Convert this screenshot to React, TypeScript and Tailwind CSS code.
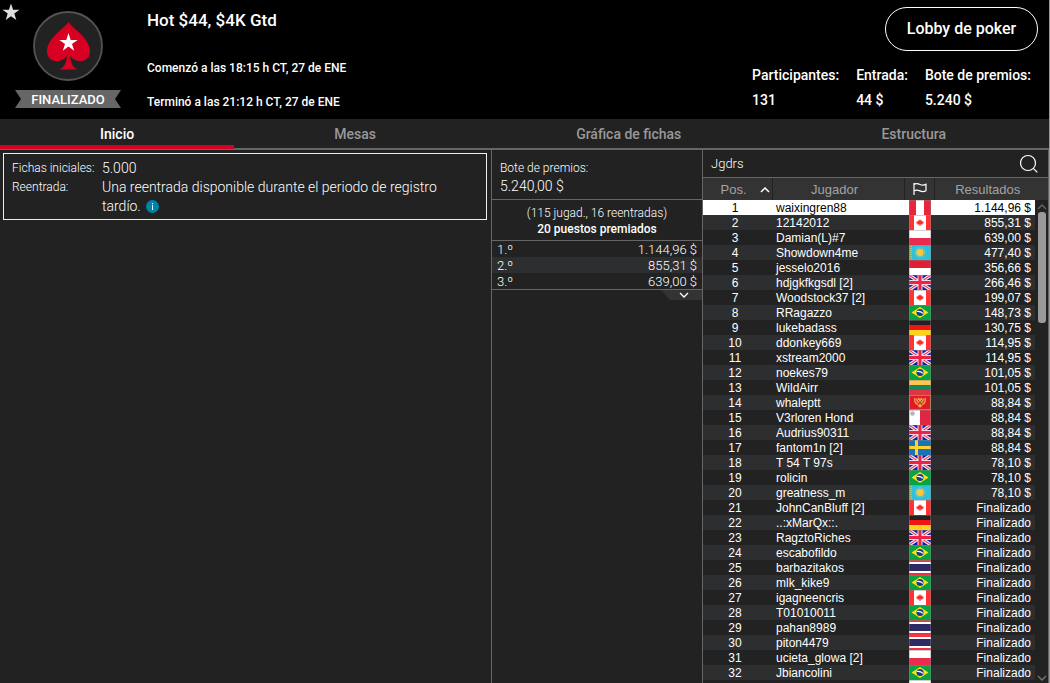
import { useState } from "react";

const flagPole = "#8886";

type FlagCode = "pe" | "ca" | "pl" | "kz" | "id" | "gb" | "br" | "de" | "lt" | "me" | "mt" | "se" | "th";

const flagNames: Record<FlagCode, string> = {
  pe: "Perú", ca: "Canadá", pl: "Polonia", kz: "Kazajistán", id: "Indonesia", gb: "Reino Unido",
  br: "Brasil", de: "Alemania", lt: "Lituania", me: "Montenegro", mt: "Malta", se: "Suecia", th: "Tailandia",
};

function FlagArt({ code }: { code: FlagCode }) {
  switch (code) {
    case "pe":
      return (<><rect width="22" height="15" fill="#fff" /><rect width="7" height="15" fill="#e8253f" /><rect x="15" width="7" height="15" fill="#e8253f" /></>);
    case "ca":
      return (
        <>
          <rect width="22" height="15" fill="#fff" />
          <rect width="5" height="15" fill="#ff3334" />
          <rect x="17" width="5" height="15" fill="#ff3334" />
          <path d="M10.500 4.500h1v1h1.500v1h1.500v2h-1v1h-2v1.500h-1V9.500h-2v-1h-1v-2H9v-1h1.500z" fill="#ff2a2a" />
        </>
      );
    case "pl":
      return (<><rect width="22" height="15" fill="#fff" /><rect y="8" width="22" height="7" fill="#ea2b50" /></>);
    case "id":
      return (<><rect width="22" height="15" fill="#fff" /><rect width="22" height="8" fill="#de1f37" /></>);
    case "kz":
      return (
        <>
          <rect width="22" height="15" fill="#30c0dc" />
          <path d="M2 1v14" stroke="#c9c75a" strokeWidth="1.500" strokeDasharray="1 1" />
          <circle cx="11" cy="7.500" r="4.600" fill="none" stroke="#a8c878" strokeWidth="1.400" strokeDasharray="1 .8" />
          <circle cx="11" cy="7.500" r="3.600" fill="#fcc740" />
        </>
      );
    case "gb":
      return (
        <>
          <rect width="22" height="15" fill="#1420a0" />
          <path d="M0 0l22 15M22 0L0 15" stroke="#f4eef8" strokeWidth="3.400" />
          <path d="M0 0l22 15M22 0L0 15" stroke="#e8405c" strokeWidth="1.100" />
          <path d="M11 0v15M0 7.500h22" stroke="#f8d8e4" strokeWidth="5" />
          <path d="M11 0v15M0 7.500h22" stroke="#ea2445" strokeWidth="3" />
        </>
      );
    case "br":
      return (
        <>
          <rect width="22" height="15" fill="#08a443" />
          <path d="M11 2l8.500 5.500L11 13 2.500 7.500z" fill="#ffdc1c" />
          <circle cx="11" cy="7.500" r="3.500" fill="#12408c" />
          <path d="M8 6.500c2-.4 4.200.2 6 1.900" stroke="#fff" strokeWidth="1.100" fill="none" />
        </>
      );
    case "de":
      return (<><rect width="22" height="15" fill="#222" /><rect y="5" width="22" height="5" fill="#f01414" /><rect y="10" width="22" height="5" fill="#ffd21c" /></>);
    case "lt":
      return (<><rect width="22" height="15" fill="#ffc64c" /><rect y="5" width="22" height="5" fill="#16875a" /><rect y="10" width="22" height="5" fill="#dc3745" /></>);
    case "me":
      return (
        <>
          <rect width="22" height="15" fill="#e11a2a" />
          <rect x=".5" y=".5" width="21" height="14" fill="none" stroke="#b9843c" />
          <path d="M6 3c-.8 3 .2 5.500 3 6.500M16 3c.8 3-.2 5.500-3 6.500M7.800 3.500c0 2 .6 3.500 2 4M14.200 3.500c0 2-.6 3.500-2 4" fill="none" stroke="#eba646" strokeWidth="1.400" />
          <path d="M9 2.500l2 1.200 2-1.200.2 2-1.200 1v4l1.500 1.500-2.500 1.800L8.500 11 10 9.500v-4l-1.200-1z" fill="#eba646" />
          <rect x="10" y="6.500" width="2" height="2.500" fill="#8a5a4a" />
        </>
      );
    case "mt":
      return (<><rect width="22" height="15" fill="#fff" /><rect x="11" width="11" height="15" fill="#de2640" /><circle cx="3.500" cy="3.500" r="2.300" fill="#b4b4b4" /></>);
    case "se":
      return (<><rect width="22" height="15" fill="#1a72b8" /><path d="M7.500 0v15M0 7.500h22" stroke="#ffd22e" strokeWidth="3" /></>);
    case "th":
      return (<><rect width="22" height="15" fill="#f0303f" /><rect y="2" width="22" height="11" fill="#fff" /><rect y="4" width="22" height="7" fill="#2e2a66" /></>);
  }
}

function Flag({ code }: { code: FlagCode }) {
  return (
    <svg viewBox="0 0 22 15" className="mx-auto block h-[15px] w-[22px]" role="img" aria-label={flagNames[code]}>
      <FlagArt code={code} />
      <path d="M0 .5h22M.5 0v15M21.500 0v15" stroke={flagPole} fill="none" />
    </svg>
  );
}

const players: [string, FlagCode, string][] = [
  ["waixingren88", "pe", "1.144,96 $"],
  ["12142012", "ca", "855,31 $"],
  ["Damian(L)#7", "pl", "639,00 $"],
  ["Showdown4me", "kz", "477,40 $"],
  ["jesselo2016", "id", "356,66 $"],
  ["hdjgkfkgsdl [2]", "gb", "266,46 $"],
  ["Woodstock37 [2]", "ca", "199,07 $"],
  ["RRagazzo", "br", "148,73 $"],
  ["lukebadass", "de", "130,75 $"],
  ["ddonkey669", "ca", "114,95 $"],
  ["xstream2000", "gb", "114,95 $"],
  ["noekes79", "br", "101,05 $"],
  ["WildAirr", "lt", "101,05 $"],
  ["whaleptt", "me", "88,84 $"],
  ["V3rloren Hond", "mt", "88,84 $"],
  ["Audrius90311", "gb", "88,84 $"],
  ["fantom1n [2]", "se", "88,84 $"],
  ["T 54 T 97s", "gb", "78,10 $"],
  ["rolicin", "br", "78,10 $"],
  ["greatness_m", "kz", "78,10 $"],
  ["JohnCanBluff [2]", "ca", "Finalizado"],
  ["..:xMarQx::.", "de", "Finalizado"],
  ["RagztoRiches", "gb", "Finalizado"],
  ["escabofildo", "br", "Finalizado"],
  ["barbazitakos", "th", "Finalizado"],
  ["mlk_kike9", "br", "Finalizado"],
  ["igagneencris", "ca", "Finalizado"],
  ["T01010011", "br", "Finalizado"],
  ["pahan8989", "th", "Finalizado"],
  ["piton4479", "th", "Finalizado"],
  ["ucieta_glowa [2]", "pl", "Finalizado"],
  ["Jbiancolini", "br", "Finalizado"],
  ["", "pl", ""],
];

const prizes = [
  ["1.º", "1.144,96 $"],
  ["2.º", "855,31 $"],
  ["3.º", "639,00 $"],
];

const tabs = ["Inicio", "Mesas", "Gráfica de fichas", "Estructura"];

const stats = [
  ["Participantes:", "131"],
  ["Entrada:", "44 $"],
  ["Bote de premios:", "5.240 $"],
];

function Header() {
  return (
    <header className="relative flex h-[119px] shrink-0 bg-black">
      <button type="button" aria-label="Favorito" className="absolute left-[2px] top-[3px]">
        <svg viewBox="0 0 18 18" className="block size-[18px]">
          <path d="M9 .5l2.100 6.200h6.400l-5.200 3.900 2 6.400L9 13.200 3.700 17l2-6.400L.5 6.700h6.400z" fill="#ddd" />
        </svg>
      </button>
      <div className="flex w-[136px] flex-col items-center pt-[11px]">
        <svg viewBox="0 0 70 70" className="size-[70px]" role="img" aria-label="PokerStars">
          <circle cx="35" cy="35" r="34" fill="#222" stroke="#545454" strokeWidth="1.800" />
          <path d="M35.500 11C31 18 14 27 14 40.500 14 46.500 18.500 50.200 24 50.200c4 0 7.500-1.800 9.800-5.200-.2 6-2.200 11.300-7.300 13.400h18c-5.100-2.100-7.100-7.400-7.300-13.400 2.300 3.400 5.800 5.200 9.800 5.200 5.500 0 10-3.700 10-9.700C57 27 40 18 35.500 11z" fill="#d70022" />
          <path d="M35.500 22l2.200 6.900h7l-5.700 4.100 2.200 6.700-5.700-4.200-5.700 4.200L32 33l-5.700-4.100h7z" fill="#fff" />
        </svg>
        <div className="relative mt-[9px] flex h-[18px] w-[106px] items-center justify-center text-[13px] font-medium leading-[18px] text-white">
          <svg viewBox="0 0 106 18" className="absolute inset-0 h-full w-full" aria-hidden="true">
            <path d="M0 0h106l-6 9 6 9H0l6-9z" fill="#666" />
          </svg>
          <span className="relative pt-[2px]">FINALIZADO</span>
        </div>
      </div>
      <div className="flex flex-1 flex-col pl-[11px] pt-[10px]">
        <h1 className="text-[17px] font-medium leading-[20px]">Hot $44, $4K Gtd</h1>
        <p className="mt-[28px] text-[12px] font-medium leading-[20px]">Comenzó a las 18:15 h CT, 27 de ENE</p>
        <p className="mt-[14px] text-[12px] font-medium leading-[20px]">Terminó a las 21:12 h CT, 27 de ENE</p>
      </div>
      <div className="flex flex-col items-end pr-[11px] pt-[7px]">
        <button type="button" className="h-[44px] w-[153px] rounded-full border border-white text-[16px] font-medium">
          Lobby de poker
        </button>
        <dl className="mr-[7px] mt-[14px] flex gap-[17px] text-[14px] font-medium leading-[20px]">
          {stats.map(([label, value]) => (
            <div key={label}>
              <dt>{label}</dt>
              <dd className="mt-[5px]">{value}</dd>
            </div>
          ))}
        </dl>
      </div>
    </header>
  );
}

function PlayersTable() {
  return (
    <div className="relative min-h-0 flex-1 overflow-hidden font-['Liberation_Sans',Arial,sans-serif]">
      <table className="w-full table-fixed border-collapse text-[12px] leading-[13px]">
        <colgroup>
          <col className="w-[69px]" />
          <col />
          <col className="w-[30px]" />
          <col className="w-[100px]" />
          <col className="w-[13px]" />
        </colgroup>
        <thead>
          <tr className="h-[22px] bg-[#333] text-[13px] text-[#a3a3a3]">
            <th scope="col" className="border-r border-[#222] p-0 font-normal">
              <span className="flex items-center justify-end gap-[13px] pr-[2px]">
                Pos.
                <svg viewBox="0 0 10 6" className="mt-[2px] h-[6px] w-[10px]" aria-hidden="true">
                  <path d="M1 5l4-4 4 4" fill="none" stroke="#fff" strokeWidth="1.500" />
                </svg>
              </span>
            </th>
            <th scope="col" className="border-r border-[#222] p-0 pr-[8px] font-normal">Jugador</th>
            <th scope="col" className="border-r border-[#222] p-0">
              <svg viewBox="0 0 14 14" className="mx-auto block size-[14px]" role="img" aria-label="País">
                <path d="M1 1v12M1 2.500c2-1.500 4-1 6 0s4 .8 6-.2v6.400c-2 1-4 1.200-6 .2s-4-1.300-6 0" fill="none" stroke="#fff" strokeWidth="1.200" />
              </svg>
            </th>
            <th scope="col" colSpan={2} className="p-0 pr-[8px] font-normal">Resultados</th>
          </tr>
        </thead>
        <tbody>
          {players.map(([name, flag, result], i) => (
            <tr key={i} className={i === 0 ? "h-[15px] bg-white text-black" : "h-[15px] even:bg-[#2d2e30]"}>
              <td className="p-0 pr-[5px] pt-[2px] text-center">{name ? i + 1 : ""}</td>
              <td className="whitespace-nowrap p-0 pl-[4px] pt-[2px]">{name}</td>
              <td className="p-0"><Flag code={flag} /></td>
              <td className="whitespace-nowrap p-0 pr-[4px] pt-[2px] text-right">{result}</td>
              <td className="bg-[#222] p-0" />
            </tr>
          ))}
        </tbody>
      </table>
      <div className="absolute bottom-0 right-0 top-[22px] flex w-[13px] flex-col items-center pb-[2px] pt-[4px]" aria-hidden="true">
        <svg viewBox="0 0 10 6" className="h-[6px] w-[10px]"><path d="M1 5l4-4 4 4" fill="none" stroke="#666" strokeWidth="1.300" /></svg>
        <div className="mt-[2px] h-[111px] w-[8px] rounded-[3px] bg-[#999]" />
        <svg viewBox="0 0 10 6" className="mt-auto h-[6px] w-[10px]"><path d="M1 1l4 4 4-4" fill="none" stroke="#777" strokeWidth="1.300" /></svg>
      </div>
    </div>
  );
}

export default function App() {
  const [active, setActive] = useState(0);
  return (
    <div className="flex h-screen flex-col overflow-hidden border-r border-[#999] bg-[#222] font-[Roboto,sans-serif] text-white">
      <Header />
      <nav className="flex h-[31px] shrink-0 border-b-2 border-[#666] pr-[3px]">
        {tabs.map((tab, i) => (
          <button
            key={tab}
            type="button"
            onClick={() => setActive(i)}
            className={
              i === active
                ? "h-[30px] flex-auto border-b-4 border-[#d70022] pt-[5px] text-[14px] font-medium text-white"
                : "h-[30px] flex-auto text-[14px] font-medium text-[#999]"
            }
          >
            {tab}
          </button>
        ))}
      </nav>
      <main className="grid min-h-0 flex-1 grid-cols-[491fr_211fr_347fr] font-light">
        <section className="pl-[3px] pr-[4px] pt-[3px]">
          <dl className="grid grid-cols-[90px_1fr] border border-[#eee] px-[8px] pb-[3px] pt-[5px] text-[14px] leading-[19px]">
            <dt className="text-[12px]">Fichas iniciales:</dt>
            <dd>5.000</dd>
            <dt className="text-[12px]">Reentrada:</dt>
            <dd className="pr-[24px]">
              Una reentrada disponible durante el periodo de registro tardío.{" "}
              <button type="button" aria-label="Información" className="ml-[2px] inline-block size-[13px] rounded-full bg-[#0083a8] align-[-2px]">
                <svg viewBox="0 0 13 13" className="block size-[13px]" aria-hidden="true">
                  <path d="M6 3h1v1.300H6zM6 5.300h1V10H6z" fill="#fff" />
                </svg>
              </button>
            </dd>
          </dl>
        </section>
        <section className="border-l border-[#666]">
          <div className="border-b border-[#666] px-[8px] pb-[3px] pt-[9px]">
            <p className="text-[12px] leading-[18px]">Bote de premios:</p>
            <p className="text-[14px] leading-[19px]">5.240,00 $</p>
          </div>
          <div className="border-b border-[#666] pb-[3px] pt-[5px] text-center text-[12px] leading-[16px]">
            <p>(115 jugad., 16 reentradas)</p>
            <p className="font-medium">20 puestos premiados</p>
          </div>
          <table className="w-full border-b border-[#666] text-[13px] leading-[14px]">
            <tbody>
              {prizes.map(([place, prize]) => (
                <tr key={place} className="even:bg-[#2d2e30]">
                  <td className="p-0 pl-[5px] pt-[2px]">{place}</td>
                  <td className="p-0 pr-[5px] pt-[2px] text-right">{prize}</td>
                </tr>
              ))}
            </tbody>
          </table>
          <button type="button" aria-label="Mostrar más premios" className="ml-auto block">
            <svg viewBox="0 0 41 10" className="block h-[10px] w-[41px]" aria-hidden="true">
              <path d="M0 0h41v10H9z" fill="#333" />
              <path d="M19 3l4 4 4-4" fill="none" stroke="#fff" strokeWidth="1.300" />
            </svg>
          </button>
        </section>
        <section className="flex min-h-0 flex-col border-x border-[#666] font-normal">
          <div className="flex h-[28px] shrink-0 items-center justify-between border-b border-[#666] pl-[8px] pr-[9px]">
            <h2 className="text-[13px] font-light">Jgdrs</h2>
            <button type="button" aria-label="Buscar">
              <svg viewBox="0 0 20 20" className="block size-[20px]" aria-hidden="true">
                <circle cx="9" cy="9" r="7.500" fill="none" stroke="#fff" strokeWidth="1.200" />
                <path d="M14.300 14.300l4 4" stroke="#fff" strokeWidth="1.200" />
              </svg>
            </button>
          </div>
          <PlayersTable />
        </section>
      </main>
    </div>
  );
}
